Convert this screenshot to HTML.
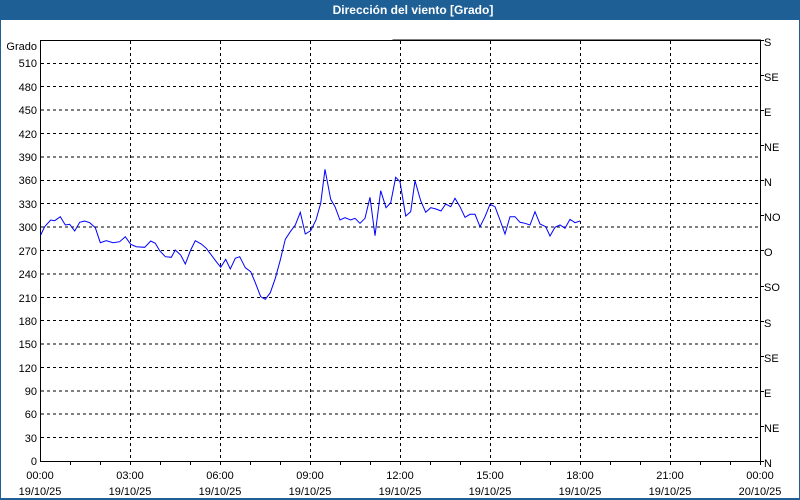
<!DOCTYPE html>
<html><head><meta charset="utf-8"><style>
html,body{margin:0;padding:0;background:#fff;}
svg{display:block;font-family:"Liberation Sans",sans-serif;font-size:11px;}
</style></head><body>
<svg width="800" height="500" xmlns="http://www.w3.org/2000/svg">
<rect x="0" y="0" width="800" height="500" fill="#fff"/>
<rect x="0" y="0" width="800" height="20" fill="#1e5f96"/>
<rect x="0" y="0" width="1" height="500" fill="#1e5f96"/>
<rect x="799" y="0" width="1" height="500" fill="#1e5f96"/>
<rect x="0" y="498" width="800" height="2" fill="#1e5f96"/>
<text x="413" y="14" fill="#fff" font-weight="bold" font-size="12" text-anchor="middle">Dirección del viento [Grado]</text>
<g stroke="#000" stroke-width="1" stroke-dasharray="3,3" shape-rendering="crispEdges">
<line x1="41" y1="437.6" x2="760" y2="437.6"/><line x1="41" y1="414.2" x2="760" y2="414.2"/><line x1="41" y1="390.8" x2="760" y2="390.8"/><line x1="41" y1="367.4" x2="760" y2="367.4"/><line x1="41" y1="344" x2="760" y2="344"/><line x1="41" y1="320.7" x2="760" y2="320.7"/><line x1="41" y1="297.3" x2="760" y2="297.3"/><line x1="41" y1="273.9" x2="760" y2="273.9"/><line x1="41" y1="250.5" x2="760" y2="250.5"/><line x1="41" y1="227.1" x2="760" y2="227.1"/><line x1="41" y1="203.7" x2="760" y2="203.7"/><line x1="41" y1="180.3" x2="760" y2="180.3"/><line x1="41" y1="156.9" x2="760" y2="156.9"/><line x1="41" y1="133.5" x2="760" y2="133.5"/><line x1="41" y1="110.1" x2="760" y2="110.1"/><line x1="41" y1="86.7" x2="760" y2="86.7"/><line x1="41" y1="63.3" x2="760" y2="63.3"/>
<line x1="130.5" y1="41" x2="130.5" y2="461"/><line x1="220.5" y1="41" x2="220.5" y2="461"/><line x1="310.5" y1="41" x2="310.5" y2="461"/><line x1="400.5" y1="41" x2="400.5" y2="461"/><line x1="490.5" y1="41" x2="490.5" y2="461"/><line x1="580.5" y1="41" x2="580.5" y2="461"/><line x1="670.5" y1="41" x2="670.5" y2="461"/>
</g>
<g stroke="#000" stroke-width="1" fill="none" shape-rendering="crispEdges">
<polyline points="40.5,40 40.5,461.5 760.5,461.5 760.5,40 40,40.5 760,40.5"/>
<path d="M70.5,461v4M100.5,461v4M130.5,461v4M160.5,461v4M190.5,461v4M220.5,461v4M250.5,461v4M280.5,461v4M310.5,461v4M340.5,461v4M370.5,461v4M400.5,461v4M430.5,461v4M460.5,461v4M490.5,461v4M520.5,461v4M550.5,461v4M580.5,461v4M610.5,461v4M640.5,461v4M670.5,461v4M700.5,461v4M730.5,461v4M760.5,461v4"/>
<path d="M760,40.5h4M760,75.5h4M760,110.5h4M760,145.5h4M760,180.5h4M760,215.5h4M760,250.5h4M760,286.5h4M760,321.5h4M760,356.5h4M760,391.5h4M760,426.5h4M760,461.5h4"/>
</g>
<polyline fill="none" stroke="#0000ff" stroke-width="1" points="40.7,235 44.7,226.7 50.7,220 54.7,220.7 60.3,216.7 65.3,225 69.7,224.3 74.7,231 79.7,222.3 84.7,221 89.7,222.7 95.3,227.7 100.3,242.7 106.3,240.7 113,242.7 119.7,241.7 125.3,236.7 130.7,244.3 136.3,246.7 144.7,247.3 150.7,241 155.3,243.3 159.7,250.7 165.3,256.7 171.3,257.3 175.3,250 180.7,255 185.3,264 190.7,250 195.3,240.7 201.3,244 206.3,248.3 211.3,255 216.3,261.7 220.7,267.3 225.7,259.3 230.3,269 235.3,258.3 239.7,256.7 245.3,267.7 250.7,271.7 255.3,282.7 260.7,296.7 265.3,299.3 270.3,292.7 275.3,278.3 280.3,260 285.3,239.3 290.3,231.7 295.3,225 300.3,212.3 305.3,234 310.7,230.7 316,220 320.7,203.3 325,169.3 330.7,199.3 335,206.7 340,220 345,217.7 350.7,220 355,218.3 360,223.3 365,218.3 370,197.3 375,235.7 380.7,190.7 386,207.7 390.7,202.7 395.7,177.3 400,181.7 405.7,216 410.7,211.7 415,180.7 420.7,200.7 425.7,212.3 430.7,207.7 436,209 441,211 445.7,204 450.7,206.7 455,198.3 460,206.7 465,217.3 470,214.3 475,214.3 480,226.7 485,216.7 490,204.3 495,206.7 500,220 505,234 510,216.7 515,216.7 520,222.3 525,223.3 530,225 535,211.7 540,224 545.7,226.7 550,236 555,227.3 560,225 565,228.3 570,219.3 575,222.7 580,221"/>
<g fill="#000" text-anchor="end">
<text x="37" y="50">Grado</text>
<text x="37" y="67">510</text><text x="37" y="91">480</text><text x="37" y="114">450</text><text x="37" y="138">420</text><text x="37" y="161">390</text><text x="37" y="184">360</text><text x="37" y="208">330</text><text x="37" y="231">300</text><text x="37" y="255">270</text><text x="37" y="278">240</text><text x="37" y="302">210</text><text x="37" y="325">180</text><text x="37" y="348">150</text><text x="37" y="372">120</text><text x="37" y="395">90</text><text x="37" y="418">60</text><text x="37" y="442">30</text><text x="37" y="465">0</text>
</g>
<g fill="#000">
<text x="764" y="46">S</text><text x="764" y="81">SE</text><text x="764" y="116">E</text><text x="764" y="151">NE</text><text x="764" y="186">N</text><text x="764" y="221">NO</text><text x="764" y="256">O</text><text x="764" y="291">SO</text><text x="764" y="327">S</text><text x="764" y="362">SE</text><text x="764" y="397">E</text><text x="764" y="432">NE</text><text x="764" y="467">N</text>
</g>
<g fill="#000" text-anchor="middle">
<text x="40" y="479">00:00</text><text x="40" y="495">19/10/25</text>
<text x="130" y="479">03:00</text><text x="130" y="495">19/10/25</text>
<text x="220" y="479">06:00</text><text x="220" y="495">19/10/25</text>
<text x="310" y="479">09:00</text><text x="310" y="495">19/10/25</text>
<text x="400" y="479">12:00</text><text x="400" y="495">19/10/25</text>
<text x="490" y="479">15:00</text><text x="490" y="495">19/10/25</text>
<text x="580" y="479">18:00</text><text x="580" y="495">19/10/25</text>
<text x="670" y="479">21:00</text><text x="670" y="495">19/10/25</text>
<text x="760" y="479">00:00</text><text x="760" y="495">20/10/25</text>
</g>
</svg>
</body></html>
